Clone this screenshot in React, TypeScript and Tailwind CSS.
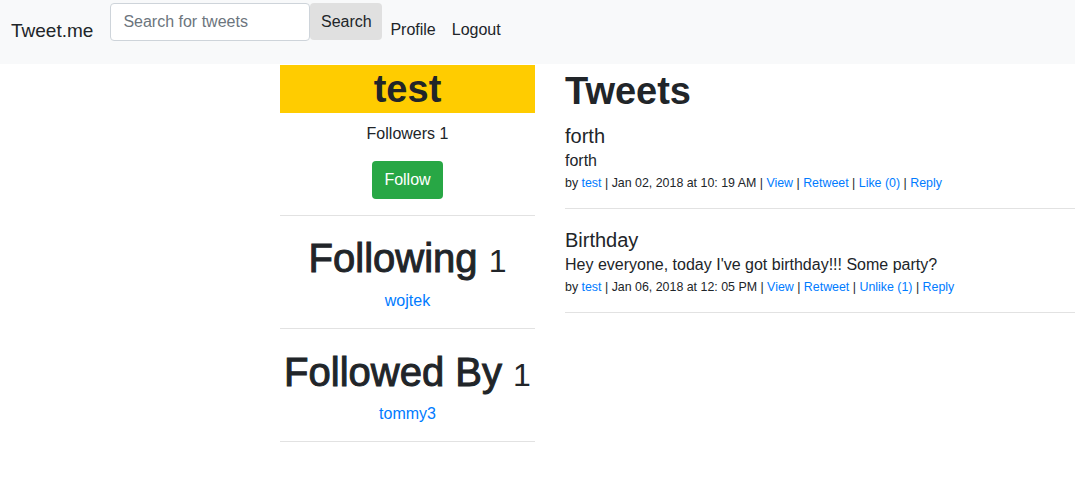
import React from 'react';

const font = { fontFamily: '"Liberation Sans", Arial, sans-serif' };

function Meta({ date, like }: { date: string; like: string }) {
  return (
    <p className="mt-px text-[12.4px] leading-[19px] text-[#212529]">
      by <a className="text-[#007bff]">test</a> | {date} | <a className="text-[#007bff]">View</a> |{' '}
      <a className="text-[#007bff]">Retweet</a> | <a className="text-[#007bff]">{like}</a> |{' '}
      <a className="text-[#007bff]">Reply</a>
    </p>
  );
}

export default function App() {
  return (
    <div className="min-h-[503px] bg-white text-[#212529]" style={font}>
      <nav className="h-16 bg-[#f8f9fa] flex items-start pl-[11px]">
        <span className="text-[19px] leading-[30px] mt-4 mr-[17px]">Tweet.me</span>
        <div className="flex mt-[3px]">
          <input
            placeholder="Search for tweets"
            className="w-[200px] h-[38px] border border-[#ced4da] rounded-[4px] bg-white px-3 text-base placeholder:text-[#6c757d] outline-none"
          />
          <button className="h-[37px] w-[72px] rounded-[4px] bg-[#e0e0e0] text-base text-[#212529]">Search</button>
        </div>
        <div className="flex gap-4 mt-[18px] ml-2 text-base leading-6 text-[#212529]">
          <a>Profile</a>
          <a>Logout</a>
        </div>
      </nav>

      <div className="flex pl-[280px] pt-px">
        <div className="w-[255px] shrink-0 text-center">
          <div className="h-12 bg-[#ffcc00] text-[38px] leading-[48px] font-bold">test</div>
          <p className="mt-[9px] leading-6">Followers 1</p>
          <button className="mt-[15px] h-[38px] w-[71px] rounded-[4px] bg-[#28a745] text-white text-base">Follow</button>
          <div className="mt-4 border-t border-[#e2e2e2]" />
          <h1 className="mt-[18px] h-12 text-[40px] leading-[48px] font-normal [-webkit-text-stroke:1px]">
            Following <span className="text-[32px] leading-none [-webkit-text-stroke:0px]">1</span>
          </h1>
          <a className="block mt-[7px] leading-6 text-[#007bff]">wojtek</a>
          <div className="mt-[15px] border-t border-[#e2e2e2]" />
          <h1 className="mt-[19px] h-12 text-[40px] leading-[48px] font-normal [-webkit-text-stroke:1px]">
            Followed By <span className="text-[32px] leading-none [-webkit-text-stroke:0px]">1</span>
          </h1>
          <a className="block mt-[6px] leading-6 text-[#007bff]">tommy3</a>
          <div className="mt-[15px] border-t border-[#e2e2e2]" />
        </div>

        <div className="flex-1 ml-[30px]">
          <h1 className="pt-[2px] text-[38px] leading-[48px] font-bold">Tweets</h1>
          <div className="pt-[9px] pb-[15px] border-b border-[#e2e2e2]">
            <h5 className="text-[20px] leading-6">forth</h5>
            <p className="leading-6 mt-px">forth</p>
            <Meta date="Jan 02, 2018 at 10: 19 AM" like="Like (0)" />
          </div>
          <div className="pt-[19px] pb-[15px] border-b border-[#e2e2e2]">
            <h5 className="text-[20px] leading-6">Birthday</h5>
            <p className="leading-6 mt-px">Hey everyone, today I've got birthday!!! Some party?</p>
            <Meta date="Jan 06, 2018 at 12: 05 PM" like="Unlike (1)" />
          </div>
        </div>
      </div>
    </div>
  );
}
